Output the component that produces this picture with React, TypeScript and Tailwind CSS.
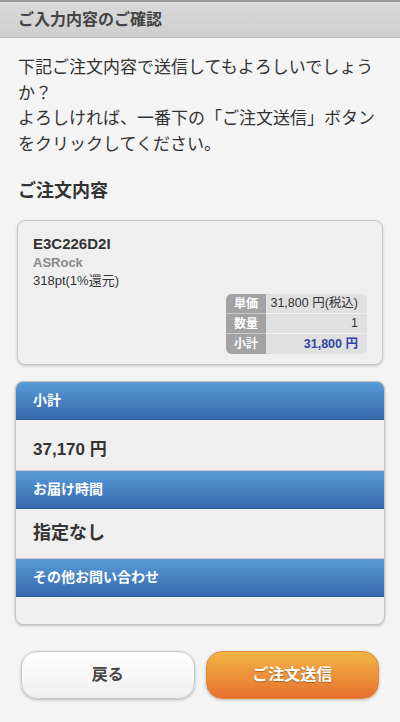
export default function App() {
  return (
    <div
      className="min-h-[722px] w-[400px] bg-[#f4f4f4] text-[#333]"
      style={{ fontFamily: '"Liberation Sans", "Noto Sans CJK JP", sans-serif' }}
    >
      {/* header */}
      <div className="h-[38px] border-t-2 border-[#9a9a9a] bg-gradient-to-b from-[#d9d9d9] to-[#cfcfcf] border-b border-b-[#bdbdbd] flex items-center px-[18px]">
        <h1 className="text-[16px] font-bold text-[#444]">ご入力内容のご確認</h1>
      </div>

      {/* message */}
      <p className="px-[18px] pt-[17px] text-[17px] leading-[25.5px] text-[#333]">
        下記ご注文内容で送信してもよろしいでしょうか？
        <br />
        よろしければ、一番下の「ご注文送信」ボタンをクリックしてください。
      </p>

      <h2 className="px-[18px] mt-[21px] text-[18px] font-bold text-[#333]">ご注文内容</h2>

      {/* item card */}
      <div className="mx-[17px] mt-[15px] rounded-[8px] border border-[#c8c8c8] bg-[#efefef] shadow-[0_1px_3px_rgba(0,0,0,0.2)] px-[15px] pt-[13px] pb-[10px]">
        <div className="text-[15px] font-bold leading-[19px] text-[#333]">E3C226D2I</div>
        <div className="text-[13px] font-bold leading-[19px] text-[#8a8a8a]">ASRock</div>
        <div className="text-[13px] leading-[18px] text-[#333]">318pt(1%還元)</div>
        <div className="flex justify-end mt-[4px]">
          <table className="w-[141px] overflow-hidden rounded-[5px] border-separate border-spacing-0 text-[12.5px]">
            <tbody>
              <tr>
                <th className="w-[40px] h-[20px] bg-[#a3a3a3] text-white text-[12px] font-bold text-center rounded-tl-[5px] border-b border-[#c9c9c9]">単価</th>
                <td className="bg-[#e0e0e0] text-right pr-[9px] border-b border-[#f2f2f2] rounded-tr-[5px]">31,800 円(税込)</td>
              </tr>
              <tr>
                <th className="h-[20px] bg-[#a3a3a3] text-white text-[12px] font-bold text-center border-b border-[#c9c9c9]">数量</th>
                <td className="bg-[#e0e0e0] text-right pr-[9px] border-b border-[#f2f2f2]">1</td>
              </tr>
              <tr>
                <th className="h-[20px] bg-[#a3a3a3] text-white text-[12px] font-bold text-center rounded-bl-[5px]">小計</th>
                <td className="bg-[#e0e0e0] text-right pr-[9px] font-bold text-[#3344aa] rounded-br-[5px]">31,800 円</td>
              </tr>
            </tbody>
          </table>
        </div>
      </div>

      {/* summary list */}
      <div className="mx-[15px] mt-[16px] rounded-[8px] border border-[#c4c4c4] bg-[#efefef] shadow-[0_1px_3px_rgba(0,0,0,0.2)] overflow-hidden">
        <div className="h-[38px] bg-gradient-to-b from-[#5a9bd8] to-[#3669ad] border-b border-[#2f5f9e] flex items-center px-[17px] text-white text-[14px] font-bold">
          小計
        </div>
        <div className="h-[51px] flex items-center px-[17px] pt-[10px] text-[17px] font-bold text-[#333] border-b border-[#c8c8c8]">
          37,170 円
        </div>
        <div className="h-[38px] bg-gradient-to-b from-[#5a9bd8] to-[#3669ad] border-b border-[#2f5f9e] flex items-center px-[17px] text-white text-[14px] font-bold">
          お届け時間
        </div>
        <div className="h-[50px] flex items-center px-[17px] text-[18px] font-bold text-[#333] border-b border-[#c8c8c8]">
          指定なし
        </div>
        <div className="h-[38px] bg-gradient-to-b from-[#5a9bd8] to-[#3669ad] border-b border-[#2f5f9e] flex items-center px-[17px] text-white text-[14px] font-bold">
          その他お問い合わせ
        </div>
        <div className="h-[27px]" />
      </div>

      {/* buttons */}
      <div className="flex gap-[11px] px-[21px] mt-[26px] pb-[22px]">
        <button className="flex-1 h-[48px] rounded-[16px] border border-[#c8c8c8] bg-gradient-to-b from-white to-[#efefef] shadow-[0_1px_3px_rgba(0,0,0,0.25)] text-[16px] font-bold text-[#444]">
          戻る
        </button>
        <button className="flex-1 h-[48px] rounded-[16px] border border-[#e2883a] bg-gradient-to-b from-[#f0b544] to-[#e66f2e] shadow-[0_1px_3px_rgba(0,0,0,0.25)] text-[16px] font-bold text-white [text-shadow:0_1px_1px_rgba(0,0,0,0.3)]">
          ご注文送信
        </button>
      </div>
    </div>
  );
}
